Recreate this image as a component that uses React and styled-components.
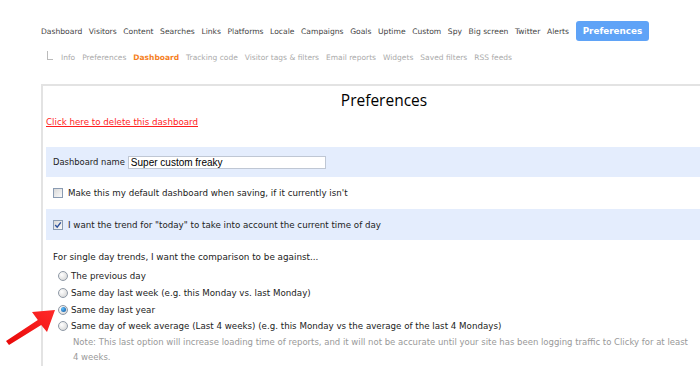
import React from "react";
import styled, { createGlobalStyle } from "styled-components";

const Global = createGlobalStyle`
  html, body { margin: 0; padding: 0; overflow: hidden; background: #fff; }
  body { font-family: "DejaVu Sans", Verdana, sans-serif; }
`;

const Page = styled.div`
  width: 700px;
  height: 368px;
  overflow: hidden;
  position: relative;
  padding: 21px 0 0 41px;
  box-sizing: border-box;
`;

const TopNav = styled.nav`
  display: flex;
  align-items: center;
  height: 20px;
  gap: 6.6px;
  font-size: 7.6px;
`;

const NavLink = styled.a`
  color: #444;
  text-decoration: none;
  white-space: nowrap;
`;

const PrefButton = styled.a`
  background: #5fa3f7;
  color: #fff;
  font-weight: bold;
  font-size: 8.8px;
  border-radius: 3px;
  height: 20px;
  padding: 0 7px;
  display: flex;
  align-items: center;
  text-decoration: none;
`;

const SubNav = styled.nav`
  display: flex;
  align-items: center;
  gap: 7px;
  height: 16px;
  margin-top: 8px;
  font-size: 7.5px;
  padding-left: 6px;
`;

const Elbow = styled.span`
  width: 5px;
  height: 8px;
  border-left: 1px solid #bbb;
  border-bottom: 1px solid #bbb;
  margin-right: 1px;
  margin-top: -4px;
`;

const SubLink = styled.a`
  color: ${(p) => (p.$active ? "#f5801e" : "#aaa")};
  font-weight: ${(p) => (p.$active ? "bold" : "normal")};
  text-decoration: none;
  white-space: nowrap;
`;

const Panel = styled.section`
  margin-top: 19px;
  width: 676px;
  border-top: 2px solid #e3e3e3;
  border-left: 2px solid #e3e3e3;
  padding: 0 0 0 3px;
  font-size: 8.7px;
  color: #222;
`;

const Title = styled.h1`
  margin: 0;
  height: 28px;
  display: flex;
  align-items: center;
  justify-content: center;
  font-family: "Open Sans", "DejaVu Sans", sans-serif;
  font-weight: normal;
  font-size: 15.5px;
  color: #000;
`;

const DeleteLink = styled.a`
  display: block;
  color: #ff1e1e;
  text-decoration: underline;
  font-size: 8.7px;
  height: 16px;
  line-height: 16px;
`;

const Row = styled.div`
  display: flex;
  align-items: center;
  gap: 3px;
  height: ${(p) => p.$h || 31}px;
  padding-left: 7px;
  margin-top: ${(p) => p.$mt || 0}px;
  background: ${(p) => (p.$blue ? "#e4edfd" : "transparent")};
  white-space: nowrap;
`;

const Label = styled.span`
  font-size: ${(p) => p.$size || 8.7}px;
  color: #222;
`;

const NameInput = styled.input`
  width: 192px;
  height: 11px;
  border: 1px solid #bfc7d4;
  font-family: "Liberation Sans", Arial, sans-serif;
  font-size: 10px;
  padding: 0 2px;
  margin-left: 0;
  background: #fff;
  color: #000;
  outline: none;
`;

const Check = styled.span`
  width: 8px;
  height: 8px;
  border: 1px solid #8a9bb2;
  background: linear-gradient(135deg, #d8d8d8, #fafafa);
  display: inline-flex;
  align-items: center;
  justify-content: center;
  margin-right: 2px;
`;

const Question = styled.div`
  padding: 8px 0 2px 7px;
  height: 18px;
  line-height: 18px;
  font-size: 8.8px;
  color: #222;
`;

const RadioList = styled.div`
  display: flex;
  flex-direction: column;
  padding-left: 12px;
`;

const RadioRow = styled.div`
  display: flex;
  align-items: center;
  gap: 3px;
  height: 16.7px;
  font-size: 8.7px;
  white-space: nowrap;
`;

const Radio = styled.span`
  width: 8px;
  height: 8px;
  border-radius: 50%;
  border: 1px solid #8f99a6;
  background: radial-gradient(circle at 35% 35%, #ffffff, #cfcfcf);
  display: inline-flex;
  align-items: center;
  justify-content: center;
  &::after {
    content: "";
    display: ${(p) => (p.$on ? "block" : "none")};
    width: 5px;
    height: 5px;
    border-radius: 50%;
    background: radial-gradient(circle at 35% 35%, #5cc0ff, #0a4c96);
  }
`;

const Note = styled.div`
  padding-left: 27px;
  font-size: 8.5px;
  color: #999;
  line-height: 15.5px;
  width: 620px;
`;

const Arrow = styled.svg`
  position: absolute;
  left: 0;
  top: 295px;
`;

export default function App() {
  const nav = ["Dashboard", "Visitors", "Content", "Searches", "Links", "Platforms", "Locale", "Campaigns", "Goals", "Uptime", "Custom", "Spy", "Big screen", "Twitter", "Alerts"];
  const sub = ["Info", "Preferences", "Dashboard", "Tracking code", "Visitor tags & filters", "Email reports", "Widgets", "Saved filters", "RSS feeds"];
  const opts = [
    "The previous day",
    "Same day last week (e.g. this Monday vs. last Monday)",
    "Same day last year",
    "Same day of week average (Last 4 weeks) (e.g. this Monday vs the average of the last 4 Mondays)",
  ];
  return (
    <Page>
      <Global />
      <TopNav>
        {nav.map((n) => (
          <NavLink key={n}>{n}</NavLink>
        ))}
        <PrefButton>Preferences</PrefButton>
      </TopNav>
      <SubNav>
        <Elbow />
        {sub.map((s) => (
          <SubLink key={s} $active={s === "Dashboard"}>{s}</SubLink>
        ))}
      </SubNav>
      <Panel>
        <Title>Preferences</Title>
        <DeleteLink>Click here to delete this dashboard</DeleteLink>
        <Row $blue $h={30} $mt={17}>
          <Label $size={8.4}>Dashboard name</Label>
          <NameInput defaultValue="Super custom freaky" />
        </Row>
        <Row $h={32}>
          <Check />
          <Label>Make this my default dashboard when saving, if it currently isn't</Label>
        </Row>
        <Row $blue $h={31}>
          <Check>
            <svg width="8" height="8" viewBox="0 0 8 8">
              <path d="M1.2 4 L3.2 6.2 L6.8 1.4" stroke="#2a4f9c" strokeWidth="1.4" fill="none" />
            </svg>
          </Check>
          <Label>I want the trend for "today" to take into account the current time of day</Label>
        </Row>
        <Question>For single day trends, I want the comparison to be against...</Question>
        <RadioList>
          {opts.map((o, i) => (
            <RadioRow key={o}>
              <Radio $on={i === 2} />
              <span>{o}</span>
            </RadioRow>
          ))}
        </RadioList>
        <Note>
          Note: This last option will increase loading time of reports, and it will not be accurate until your site has been logging traffic to Clicky for at least 4 weeks.
        </Note>
      </Panel>
      <Arrow width="60" height="55" viewBox="0 0 60 55">
        <defs>
          <linearGradient id="ag" x1="0" y1="1" x2="1" y2="0">
            <stop offset="0" stopColor="#e80808" />
            <stop offset="1" stopColor="#ff2a2a" />
          </linearGradient>
        </defs>
        <path d="M6 46 L37.8 25 L32 17 L55 15 L47 37 L41.2 30 L9 50 Z" fill="url(#ag)" />
      </Arrow>
    </Page>
  );
}
